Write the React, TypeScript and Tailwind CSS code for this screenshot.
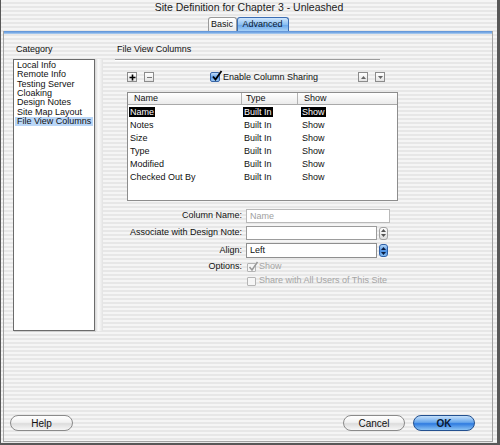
import React from 'react';

// Aqua-style "Site Definition" dialog, Advanced tab → File View Columns

const STRIPES =
  'bg-[repeating-linear-gradient(180deg,#f5f5f5_0px,#f5f5f5_2px,#e7e7e7_2px,#e7e7e7_4px)]';

const categories = [
  'Local Info',
  'Remote Info',
  'Testing Server',
  'Cloaking',
  'Design Notes',
  'Site Map Layout',
  'File View Columns',
];

const columns = [
  { name: 'Name', type: 'Built In', show: 'Show' },
  { name: 'Notes', type: 'Built In', show: 'Show' },
  { name: 'Size', type: 'Built In', show: 'Show' },
  { name: 'Type', type: 'Built In', show: 'Show' },
  { name: 'Modified', type: 'Built In', show: 'Show' },
  { name: 'Checked Out By', type: 'Built In', show: 'Show' },
];

function Stepper({ blue }: { blue?: boolean }) {
  const fill = blue ? '#0b1d40' : '#555';
  return (
    <div
      className={
        blue
          ? 'w-[9px] h-[13px] rounded-[3px] border border-[#2d5fa8] bg-[linear-gradient(180deg,#b3d6f8,#4a8fe2_55%,#86bdf0)] flex flex-col items-center justify-center gap-[2px]'
          : 'w-[9px] h-[13px] rounded-[3px] border border-[#a2a2a2] bg-[linear-gradient(180deg,#ffffff,#dedede)] flex flex-col items-center justify-center gap-[2px]'
      }
    >
      <svg width="5" height="3" viewBox="0 0 5 3">
        <path d="M0 3L2.5 0L5 3Z" fill={fill} />
      </svg>
      <svg width="5" height="3" viewBox="0 0 5 3">
        <path d="M0 0L2.5 3L5 0Z" fill={fill} />
      </svg>
    </div>
  );
}

function SmallSquare({ children }: { children: React.ReactNode }) {
  return (
    <div className="w-[10px] h-[10px] border border-[#8c8c8c] bg-[linear-gradient(180deg,#ffffff,#e4e4e4)] flex items-center justify-center">
      {children}
    </div>
  );
}

function AquaButton({ label, primary, width }: { label: string; primary?: boolean; width: string }) {
  return (
    <div
      className={
        primary
          ? `${width} h-[16px] rounded-full border border-[#23508f] bg-[linear-gradient(180deg,#c4e0fb_0%,#6aa8ec_45%,#2f7be0_55%,#8cc4f4_100%)] flex items-center justify-center text-[10px] font-bold text-[#0b1a33]`
          : `${width} h-[16px] rounded-full border border-[#8a8a8a] bg-[linear-gradient(180deg,#ffffff_0%,#f1f1f1_45%,#dcdcdc_55%,#f7f7f7_100%)] flex items-center justify-center text-[10px] text-[#111]`
      }
    >
      {label}
    </div>
  );
}

export default function App() {
  return (
    <div className="w-[500px] h-[445px] bg-[#585858] pl-[1px] pr-[3px] pb-[2px] font-['Liberation_Sans',Arial,sans-serif] text-[#111]">
      <div className={`h-full flex flex-col ${STRIPES}`}>
        {/* ── Title bar ─────────────────────────────── */}
        <div className="h-[15px] flex items-center justify-center text-[10.5px] text-[#1c1c1c]">
          Site Definition for Chapter 3 - Unleashed
        </div>

        {/* ── Tabs ──────────────────────────────────── */}
        <div className="h-[16px] flex items-end justify-center pr-[2px]">
          <div className="w-[29px] h-[14px] rounded-t-[3px] border border-b-0 border-[#9a9a9a] bg-[linear-gradient(180deg,#ffffff,#e9e9e9)] flex items-center justify-center text-[9px]">
            Basic
          </div>
          <div className="w-[52px] h-[14px] rounded-t-[3px] border border-b-0 border-[#3b6db3] bg-[linear-gradient(180deg,#cfe6fd,#8cc0f2_50%,#6ba9ec_55%,#a6d0f6)] flex items-center justify-center text-[9px] text-[#0b1730]">
            Advanced
          </div>
        </div>

        {/* ── Panel ─────────────────────────────────── */}
        <div className="flex-1 ml-[2px] mr-[4px] mb-[1px] border border-t-0 border-[#a3a3a3] flex flex-col">
          <div className="h-[3px] bg-[linear-gradient(180deg,#5d91d6,#7eaee6_60%,#b5d2f2)]" />

          <div className="flex-1 flex flex-col">
            <div className="flex pl-[9px] pt-[10px]">
              {/* Category column */}
              <div className="w-[82px] flex flex-col">
                <div className="h-[11px] leading-[11px] text-[9px] pl-[3px]">Category</div>
                <div className="mt-[4px] h-[272px] bg-white border border-[#6b6b6b] pt-[1px] shadow-[1px_1px_0_#cfcfcf]">
                  {categories.map((c) => (
                    <div
                      key={c}
                      className={
                        c === 'File View Columns'
                          ? 'h-[9.33px] leading-[9.33px] text-[9px] pl-[2px] mx-[1px] bg-[#b9d6f7]'
                          : 'h-[9.33px] leading-[9.33px] text-[9px] pl-[3px]'
                      }
                    >
                      {c}
                    </div>
                  ))}
                </div>
              </div>

              {/* splitter */}
              <div className="mt-[15px] w-[8px] h-[272px] bg-[linear-gradient(90deg,#d5d5d5,#fafafa_40%,#f0f0f0_70%,#e2e2e2)]" />

              {/* File View Columns */}
              <div className="ml-[12px] flex flex-col">
                <div className="h-[11px] leading-[11px] text-[9px] pl-[2px]">File View Columns</div>
                <div className="mt-[4px] w-[265px] border-t border-[#9c9c9c] border-b border-b-white" />

                {/* toolbar row */}
                <div className="mt-[11px] w-[270px] h-[10px] flex items-center pl-[12px]">
                  <SmallSquare>
                    <svg width="7" height="7" viewBox="0 0 7 7">
                      <path d="M3.5 0.5V6.5M0.5 3.5H6.5" stroke="#000" strokeWidth="1.6" />
                    </svg>
                  </SmallSquare>
                  <div className="ml-[7px]">
                    <SmallSquare>
                      <svg width="7" height="7" viewBox="0 0 7 7">
                        <path d="M1 3.5H6" stroke="#777" strokeWidth="1" />
                      </svg>
                    </SmallSquare>
                  </div>
                  <div className="ml-[56px] w-[10px] h-[10px] rounded-[2px] border border-[#3866a8] bg-[linear-gradient(180deg,#c2ddf9,#5c9de8_55%,#9cc8f3)] relative">
                    <svg className="absolute -top-[3px] left-0" width="12" height="12" viewBox="0 0 12 12">
                      <path d="M2 6.5L4.5 9.5L10.5 1" stroke="#000" strokeWidth="1.8" fill="none" />
                    </svg>
                  </div>
                  <div className="ml-[3px] text-[9px] leading-[10px]">Enable Column Sharing</div>
                  <div className="ml-auto">
                    <SmallSquare>
                      <svg width="5" height="3" viewBox="0 0 5 3">
                        <path d="M0 3L2.5 0L5 3Z" fill="#666" />
                      </svg>
                    </SmallSquare>
                  </div>
                  <div className="ml-[7px]">
                    <SmallSquare>
                      <svg width="5" height="3" viewBox="0 0 5 3">
                        <path d="M0 0L2.5 3L5 0Z" fill="#666" />
                      </svg>
                    </SmallSquare>
                  </div>
                </div>

                {/* columns table */}
                <div className="mt-[10px] ml-[12px] w-[271px] h-[109px] bg-white border border-[#8d8d8d] flex flex-col text-[9px]">
                  <div className="h-[12px] flex border-b border-[#a9a9a9] bg-[linear-gradient(180deg,#ffffff,#ebebeb)]">
                    <div className="w-[114px] pl-[6px] leading-[11px] border-r border-[#b3b3b3]">Name</div>
                    <div className="w-[56px] pl-[4px] leading-[11px] border-r border-[#b3b3b3]">Type</div>
                    <div className="flex-1 pl-[6px] leading-[11px]">Show</div>
                  </div>
                  {columns.map((r, i) => {
                    const sel = i === 0 ? 'bg-black text-white px-[1px]' : 'px-[1px]';
                    return (
                      <div key={r.name} className="h-[13px] flex items-center leading-[10px]">
                        <div className="w-[115px] pl-[1px]">
                          <span className={sel}>{r.name}</span>
                        </div>
                        <div className="w-[56px]">
                          <span className={sel}>{r.type}</span>
                        </div>
                        <div className="flex-1 pl-[2px]">
                          <span className={sel}>{r.show}</span>
                        </div>
                      </div>
                    );
                  })}
                </div>

                {/* form */}
                <div className="mt-[8px] flex flex-col text-[9px]">
                  <div className="h-[14px] flex items-center">
                    <div className="w-[127px] text-right">Column Name:</div>
                    <div className="ml-[4px] w-[144px] h-[14px] bg-white border border-[#b9b9b9] pl-[3px] leading-[12px] text-[#a0a0a0]">
                      Name
                    </div>
                  </div>
                  <div className="mt-[3px] h-[14px] flex items-center">
                    <div className="w-[127px] text-right">Associate with Design Note:</div>
                    <div className="ml-[4px] w-[131px] h-[14px] bg-white border border-[#9c9c9c]" />
                    <div className="ml-[2px]">
                      <Stepper />
                    </div>
                  </div>
                  <div className="mt-[3px] h-[15px] flex items-center">
                    <div className="w-[127px] text-right">Align:</div>
                    <div className="ml-[4px] w-[131px] h-[15px] bg-white border border-[#8f8f8f] pl-[3px] leading-[13px]">
                      Left
                    </div>
                    <div className="ml-[2px]">
                      <Stepper blue />
                    </div>
                  </div>
                  <div className="mt-[3px] h-[12px] flex items-center">
                    <div className="w-[127px] text-right">Options:</div>
                    <div className="ml-[5px] w-[9px] h-[9px] border border-[#b5b5b5] bg-[#f6f6f6] rounded-[1px] relative">
                      <svg className="absolute -top-[3px] left-0" width="11" height="11" viewBox="0 0 11 11">
                        <path d="M1.5 6L4 9L9.5 1" stroke="#9a9a9a" strokeWidth="1.5" fill="none" />
                      </svg>
                    </div>
                    <div className="ml-[3px] text-[#a5a5a5]">Show</div>
                  </div>
                  <div className="mt-[2px] h-[12px] flex items-center">
                    <div className="w-[127px]" />
                    <div className="ml-[5px] w-[9px] h-[9px] border border-[#b5b5b5] bg-[#f6f6f6] rounded-[1px]" />
                    <div className="ml-[3px] text-[#a5a5a5]">Share with All Users of This Site</div>
                  </div>
                </div>
              </div>
            </div>

            {/* ── Bottom buttons ───────────────────────── */}
            <div className="mt-auto pb-[10px] pl-[6px] pr-[17px] flex items-center">
              <AquaButton label="Help" width="w-[63px]" />
              <div className="ml-auto">
                <AquaButton label="Cancel" width="w-[62px]" />
              </div>
              <div className="ml-[8px]">
                <AquaButton label="OK" width="w-[62px]" primary />
              </div>
            </div>
          </div>
        </div>
      </div>
    </div>
  );
}
